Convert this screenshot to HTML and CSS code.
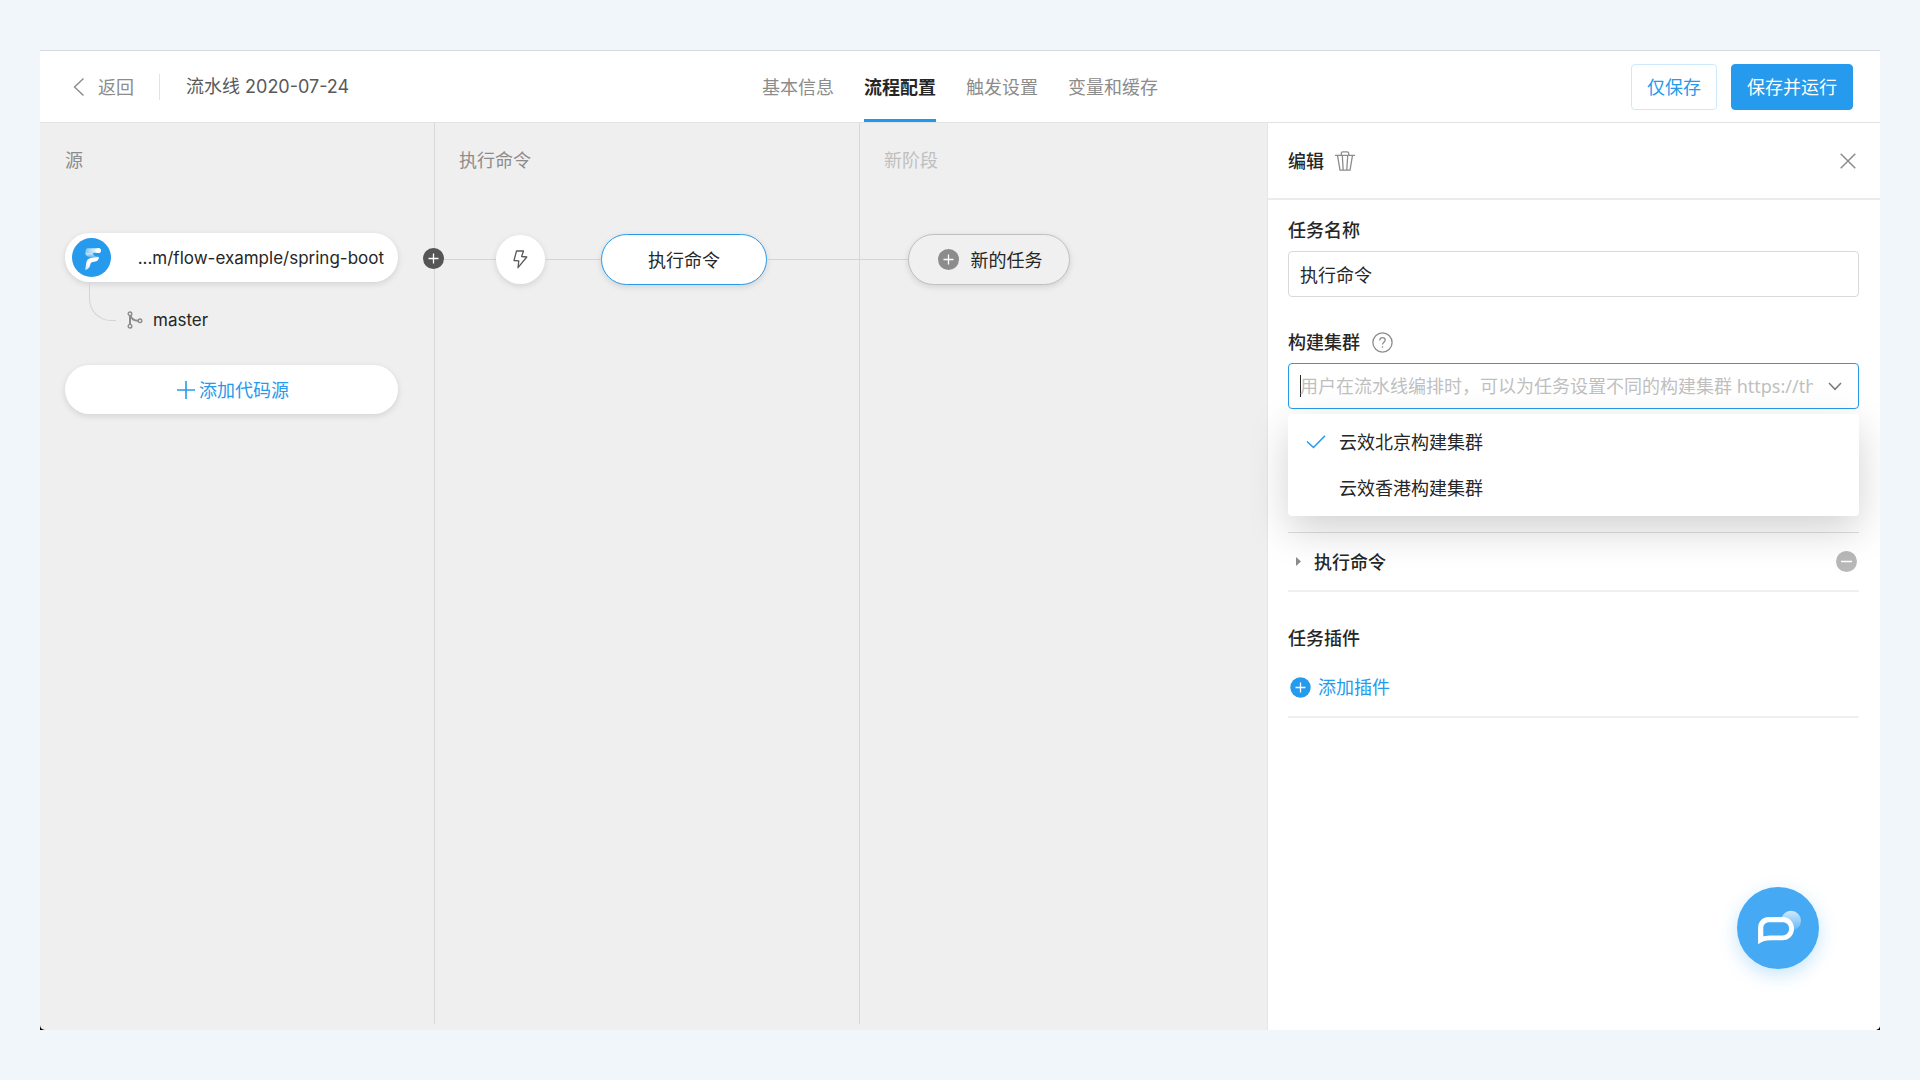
FILE: index.html
```html
<!DOCTYPE html>
<html lang="zh-CN">
<head>
<meta charset="utf-8">
<title>流水线 2020-07-24</title>
<link rel="stylesheet" href="styles.css">
</head>
<body>
<div class="frame">
<div class="app">
  <header class="topbar">
    <div class="crumbs">
      <a class="back" href="#">
        <svg width="12" height="20" viewBox="0 0 12 20" fill="none" stroke="currentColor" stroke-width="1.4"><path d="M10.500 1.500 1.500 10l9 8.500"/></svg>
        <span>返回</span>
      </a>
      <h1 class="pipeline-name">流水线 2020-07-24</h1>
    </div>
    <nav class="tabs">
      <a class="tab" href="#">基本信息</a>
      <a class="tab tab-active" href="#">流程配置</a>
      <a class="tab" href="#">触发设置</a>
      <a class="tab" href="#">变量和缓存</a>
    </nav>
    <div class="actions">
      <button class="btn" type="button">仅保存</button>
      <button class="btn btn-primary" type="button">保存并运行</button>
    </div>
  </header>

  <div class="workspace">
    <main class="canvas">
      <section class="stage stage-source">
        <h2 class="stage-title">源</h2>
        <button class="pill source" type="button">
          <svg width="39" height="39" viewBox="0 0 39 39">
            <defs>
              <linearGradient id="fold" x1="0" y1="0" x2="0" y2="1"><stop offset="0" stop-color="#fff" stop-opacity=".8"/><stop offset="1" stop-color="#fff" stop-opacity=".25"/></linearGradient>
              <linearGradient id="bar" x1="0" y1="0" x2="1" y2="0"><stop offset="0" stop-color="#fff" stop-opacity=".45"/><stop offset="1" stop-color="#fff"/></linearGradient>
              <linearGradient id="stem" x1="0" y1="1" x2=".6" y2="0"><stop offset="0" stop-color="#fff" stop-opacity=".75"/><stop offset=".5" stop-color="#fff"/></linearGradient>
            </defs>
            <circle cx="19.500" cy="19.500" r="19.500" fill="#269aec"/>
            <path d="M16 10.200h10.500v4.600H13.400c0-2.700.8-4.600 2.600-4.600z" fill="url(#bar)"/>
            <path d="M13.400 14.800h8c-1 1.800.5 3.200 5.600 4.200-3.200.5-6.500.5-9 .2-3.200-.5-4.800-2-4.600-4.400z" fill="url(#fold)"/>
            <circle cx="26.400" cy="12.500" r="2.600" fill="#fff"/>
            <path d="M14.200 25.200c.6-3.900 3-5.500 6.800-5.800l6-.4c-.3 3-1.800 4.600-4.600 4.700-2.600.2-3.800.8-4 2.600-.4 3-2 5-5.200 5.600z" fill="url(#stem)"/>
          </svg>
          <span class="source-name latin">...m/flow-example/spring-boot</span>
        </button>
        <div class="branch">
          <span class="elbow"></span>
          <span class="branch-label">
            <svg width="16" height="18" viewBox="0 0 16 18" fill="none" stroke="#8c8c8c" stroke-width="1.400"><circle cx="3" cy="2.800" r="1.800"/><circle cx="3" cy="15.200" r="1.800"/><circle cx="13" cy="9.800" r="1.800"/><path d="M3 4.600v8.800" stroke-width="2"/><path d="M3.500 4.600c1 3.800 3.500 5.200 7.700 5.200" stroke-width="2"/></svg>
            <span class="latin">master</span>
          </span>
        </div>
        <button class="pill add-source" type="button">
          <svg width="18" height="18" viewBox="0 0 18 18" stroke="currentColor" stroke-width="1.600"><path d="M9 0v18M0 9h18"/></svg>
          <span>添加代码源</span>
        </button>
      </section>

      <section class="stage stage-run">
        <h2 class="stage-title">执行命令</h2>
        <div class="lane">
          <button class="insert" type="button" aria-label="插入阶段">
            <svg width="21" height="21" viewBox="0 0 21 21"><circle cx="10.500" cy="10.500" r="10.500" fill="#555"/><path d="M10.500 5.500v10M5.500 10.500h10" stroke="#fff" stroke-width="1.300"/></svg>
          </button>
          <span class="wire wire-long"></span>
          <button class="trigger" type="button" aria-label="触发方式">
            <svg width="15" height="19" viewBox="0 0 15 19" fill="none" stroke="#595959" stroke-width="1.300" stroke-linejoin="round"><path d="M3.500 1h7L8.600 6.500l5.200.5L5 17.700l.8-6.900L1 10.500z"/></svg>
          </button>
          <span class="wire wire-mid"></span>
          <button class="pill task task-selected" type="button">执行命令</button>
          <span class="wire wire-fill"></span>
        </div>
      </section>

      <section class="stage stage-new">
        <h2 class="stage-title">新阶段</h2>
        <div class="lane">
          <span class="wire wire-short"></span>
          <button class="pill task task-new" type="button">
            <svg width="21" height="21" viewBox="0 0 21 21"><circle cx="10.500" cy="10.500" r="10.500" fill="#8c8c8c"/><path d="M10.500 5.500v10M5.500 10.500h10" stroke="#fff" stroke-width="1.300"/></svg>
            <span>新的任务</span>
          </button>
        </div>
      </section>
    </main>

    <aside class="panel">
      <div class="panel-head">
        <h2 class="heading">编辑</h2>
        <button class="icon-btn" type="button" aria-label="删除">
          <svg width="20" height="20" viewBox="0 0 20 20" fill="none" stroke="#8c8c8c" stroke-width="1.300"><path d="M0 4.300h20M6.300 4V2.200C6.300 1.200 7 .8 7.800.8h4.400c.8 0 1.500.4 1.500 1.400V4M2.500 4.300 5 19.200h10l2.500-14.900M7.300 4.500l.9 14.500M12.700 4.500l-.9 14.500"/></svg>
        </button>
        <button class="icon-btn close" type="button" aria-label="关闭">
          <svg width="16" height="16" viewBox="0 0 16 16" stroke="#8c8c8c" stroke-width="1.500"><path d="M.7.7l14.600 14.600M15.300.7.700 15.300"/></svg>
        </button>
      </div>

      <form class="panel-body">
        <div class="field">
          <label class="heading" for="task-name">任务名称</label>
          <input class="box" id="task-name" type="text" value="执行命令">
        </div>

        <div class="field">
          <div class="label-row">
            <label class="heading" for="cluster">构建集群</label>
            <svg width="21" height="21" viewBox="0 0 21 21" fill="none" stroke="#8c8c8c" stroke-width="1.300"><circle cx="10.500" cy="10.500" r="9.600"/><path d="M7.800 8.400c0-1.700 1.100-2.800 2.700-2.800s2.700 1 2.700 2.500c0 2-2.700 2.300-2.700 4.400M10.500 14.200v1.500"/></svg>
          </div>
          <div class="combo">
            <div class="box combo-box">
              <span class="caret"></span>
              <input class="combo-input" id="cluster" type="text" role="combobox" aria-expanded="true" aria-controls="cluster-list" placeholder="用户在流水线编排时，可以为任务设置不同的构建集群 https://thoughts.aliyun.com">
              <svg width="14" height="9" viewBox="0 0 14 9" fill="none" stroke="#7a7a7a" stroke-width="1.500"><path d="M1 1l6 6.300L13 1"/></svg>
            </div>
            <ul class="options" id="cluster-list" role="listbox">
              <li class="option" role="option" aria-selected="true">
                <svg width="20" height="14" viewBox="0 0 20 14" fill="none" stroke="#269aec" stroke-width="1.600"><path d="M1 6.500l6.500 6L19 .8"/></svg>
                <span>云效北京构建集群</span>
              </li>
              <li class="option" role="option" aria-selected="false">
                <span class="no-check"></span>
                <span>云效香港构建集群</span>
              </li>
            </ul>
          </div>
        </div>

        <div class="step">
          <svg class="step-arrow" width="5" height="9" viewBox="0 0 5 9"><path d="M0 0l5 4.500L0 9z" fill="#8c8c8c"/></svg>
          <h3 class="heading">执行命令</h3>
          <button class="icon-btn step-remove" type="button" aria-label="移除步骤">
            <svg width="21" height="21" viewBox="0 0 21 21"><circle cx="10.500" cy="10.500" r="10.500" fill="#b8b8b8"/><path d="M5 10.500h11" stroke="#fff" stroke-width="1.500"/></svg>
          </button>
        </div>

        <div class="plugins">
          <h3 class="heading">任务插件</h3>
          <button class="add-plugin" type="button">
            <svg width="21" height="21" viewBox="0 0 21 21"><circle cx="10.500" cy="10.500" r="10.200" fill="#269aec"/><path d="M10.500 5.500v10M5.500 10.500h10" stroke="#fff" stroke-width="1.300"/></svg>
            <span>添加插件</span>
          </button>
        </div>
      </form>

      <button class="chat" type="button" aria-label="在线客服">
        <svg width="82" height="82" viewBox="0 0 82 82">
          <defs><linearGradient id="glow" x1="0" y1="0" x2="0" y2="1"><stop offset="0" stop-color="#fff" stop-opacity=".75"/><stop offset="1" stop-color="#fff" stop-opacity=".15"/></linearGradient></defs>
          <circle cx="54" cy="33.800" r="10" fill="url(#glow)"/>
          <path fill="#45a9f3" d="M26 35h27v14H26z"/>
          <path fill="#fff" fill-rule="evenodd" d="M32 30h13.500C52 30 57 34.800 57 41.500S52 53.300 45.500 53.300H34c-5 0-8.500 1-12.900 3.900V41C21.100 34.500 25.500 30 32 30zM32.500 35.200c-4 0-6.200 2.300-6.200 6.100v8c3-.7 5.700-.8 8.700-.8h10.500c3.800 0 6.600-2.900 6.600-6.900s-2.800-6.400-6.600-6.400z"/>
        </svg>
      </button>
    </aside>
  </div>
</div>
</div>
</body>
</html>
```
FILE: styles.css
```css
* {
  box-sizing: border-box;
}

body {
  margin: 0;
  padding: 50px 40px;
  background: #f1f6fb;
  color: #262626;
  font-family: "Noto Sans", "Noto Sans CJK SC", sans-serif;
  font-size: 18px;
  line-height: 26px;
}

h1,
h2,
h3,
ul {
  margin: 0;
  padding: 0;
  font-size: 18px;
  font-weight: 400;
  list-style: none;
}

svg {
  display: block;
  flex: none;
}

a {
  color: inherit;
  text-decoration: none;
}

button,
input {
  margin: 0;
  padding: 0;
  border: 0;
  background: none;
  color: inherit;
  font: inherit;
}

.latin {
  font-family: Inter, "Noto Sans CJK SC", sans-serif;
  font-size: 17px;
}

.heading {
  font-weight: 500;
}

.frame {
  background: #000;
}

.app {
  display: flex;
  flex-direction: column;
  min-height: calc(100vh - 100px);
  border-top: 1px solid #d6dade;
  border-radius: 0 0 5px 5px;
  background: #efefef;
  overflow: hidden;
}

/* Top bar */
.topbar {
  display: grid;
  grid-template-columns: 1fr auto 1fr;
  align-items: stretch;
  height: 72px;
  border-bottom: 1px solid #e3e3e3;
  background: #fff;
}

.crumbs {
  display: flex;
  align-items: center;
  padding-left: 33px;
}

.back {
  display: flex;
  align-items: center;
  gap: 13px;
  padding-right: 25px;
  border-right: 1px solid #e3e3e3;
  color: #8c8c8c;
}

.pipeline-name {
  padding-left: 26px;
  color: #595959;
  font-family: Inter, "Noto Sans CJK SC", sans-serif;
}

.tabs {
  display: flex;
  gap: 30px;
}

.tab {
  display: flex;
  align-items: center;
  border-top: 3px solid transparent;
  border-bottom: 3px solid transparent;
  color: #8c8c8c;
}

.tab-active {
  border-bottom-color: #1b9aee;
  color: #262626;
  font-weight: 700;
}

.actions {
  display: flex;
  align-items: center;
  justify-content: flex-end;
  gap: 14px;
  padding-right: 27px;
}

.btn {
  height: 46px;
  padding: 0 15px;
  border: 1px solid #cdeafc;
  border-radius: 4px;
  color: #269aec;
}

.btn-primary {
  border-color: #269aec;
  background: #269aec;
  color: #fff;
}

/* Pipeline canvas */
.workspace {
  display: flex;
  flex: 1;
}

.canvas {
  display: flex;
  flex: 1;
  padding-bottom: 6px;
}

.stage {
  padding-top: 24px;
  border-right: 1px solid #d8d8d8;
}

.stage-source {
  width: 395px;
  padding-right: 36px;
  padding-left: 25px;
}

.stage-run {
  width: 425px;
}

.stage-new {
  flex: 1;
  border-right: 0;
}

.stage-title {
  margin-bottom: 61px;
  color: #8c8c8c;
}

.stage-source .stage-title {
  margin-bottom: 60px;
}

.stage-run .stage-title,
.stage-new .stage-title {
  padding-left: 24px;
}

.stage-new .stage-title {
  color: #bfbfbf;
}

.pill {
  display: flex;
  align-items: center;
  border-radius: 26px;
  background: #fff;
  box-shadow: 0 2px 6px rgba(0, 0, 0, .12);
}

.source {
  width: 100%;
  height: 49px;
  padding: 0 14px 0 7px;
}

.source-name {
  flex: 1;
  text-align: right;
}

.branch {
  display: flex;
  height: 51px;
  margin-bottom: 32px;
  padding-left: 24px;
}

.elbow {
  width: 27px;
  height: 39px;
  border-bottom: 1px solid #d4d4d4;
  border-left: 1px solid #d4d4d4;
  border-bottom-left-radius: 22px;
}

.branch-label {
  display: flex;
  align-items: center;
  align-self: flex-end;
  gap: 10px;
  padding-left: 11px;
}

.add-source {
  justify-content: center;
  gap: 4px;
  width: 100%;
  height: 49px;
  padding-left: 3px;
  color: #269aec;
}

.lane {
  display: flex;
  position: relative;
  align-items: center;
  height: 51px;
}

.wire {
  flex: none;
  height: 1px;
  background: #d4d4d4;
}

.wire-long {
  width: 61px;
}

.wire-mid {
  width: 56px;
}

.wire-short {
  width: 48px;
}

.wire-fill {
  flex: 1;
}

.insert {
  position: absolute;
  top: 14px;
  left: -12px;
}

.trigger {
  display: flex;
  align-items: center;
  justify-content: center;
  width: 49px;
  height: 49px;
  border-radius: 50%;
  background: #fff;
  box-shadow: 0 2px 6px rgba(0, 0, 0, .12);
}

.task {
  justify-content: center;
  height: 51px;
  border: 1px solid #bfbfbf;
}

.task-selected {
  width: 166px;
  border-color: #269aec;
}

.task-new {
  gap: 12px;
  width: 162px;
  padding-left: 2px;
  background: #f0f0f0;
}

/* Edit panel */
.panel {
  position: relative;
  width: 613px;
  border-left: 1px solid #e6e6e6;
  background: #fff;
}

.panel-head {
  display: flex;
  align-items: center;
  gap: 11px;
  height: 77px;
  padding: 0 24px 0 20px;
  border-bottom: 2px solid #ebebeb;
}

.close {
  margin-left: auto;
}

.panel-body {
  padding: 17px 21px 17px 20px;
}

.field {
  display: flex;
  flex-direction: column;
  gap: 8px;
  margin-bottom: 32px;
}

.label-row {
  display: flex;
  align-items: center;
  gap: 12px;
}

.box {
  width: 100%;
  height: 46px;
  padding: 0 11px;
  border: 1px solid #d9d9d9;
  border-radius: 4px;
}

.combo {
  position: relative;
}

.combo-box {
  display: flex;
  align-items: center;
  padding-right: 16px;
  border-color: #269aec;
}

.caret {
  width: 1px;
  height: 22px;
  margin-right: -1px;
  background: #262626;
}

.combo-input {
  flex: 1;
  min-width: 0;
  margin-right: 15px;
  outline: 0;
}

.combo-input::placeholder {
  color: #bfbfbf;
  opacity: 1;
}

.options {
  position: absolute;
  top: 51px;
  right: 0;
  left: 0;
  padding: 5px 0;
  border-radius: 4px;
  background: #fff;
  box-shadow: 0 14px 40px rgba(0, 0, 0, .18);
}

.option {
  display: flex;
  align-items: center;
  gap: 13px;
  height: 46px;
  padding-left: 18px;
}

.no-check {
  width: 20px;
}

.step {
  display: flex;
  align-items: center;
  height: 60px;
  margin-top: 123px;
  padding: 0 2px 0 8px;
  border-top: 1px solid #dedede;
  border-bottom: 2px solid #f0f0f0;
}

.step-arrow {
  margin-right: 13px;
}

.step-remove {
  margin-left: auto;
}

.plugins {
  display: flex;
  flex-direction: column;
  align-items: flex-start;
  gap: 23px;
  padding: 33px 0 16px;
  border-bottom: 2px solid #f0f0f0;
}

.add-plugin {
  display: flex;
  align-items: center;
  gap: 7px;
  padding-left: 2px;
  color: #269aec;
}

.chat {
  position: absolute;
  right: 61px;
  bottom: 61px;
  border-radius: 50%;
  background: #45a9f3;
  box-shadow: 0 6px 18px rgba(69, 169, 243, .3);
}
```
